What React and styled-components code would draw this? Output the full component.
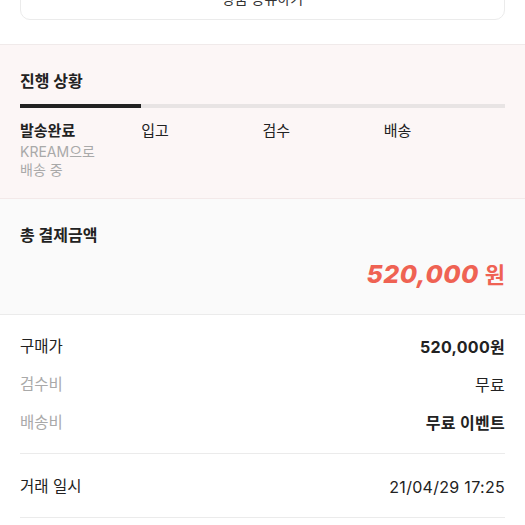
import styled, { createGlobalStyle } from 'styled-components';

const Global = createGlobalStyle`
  body {
    margin: 0;
    background: #fff;
    font-family: Inter, "Noto Sans CJK KR", "Noto Sans", sans-serif;
    color: #222;
    overflow: hidden;
  }
`

const Page = styled.div`
  width: 525px;
`

const ShareWrap = styled.div`
  padding: 0 20px 24px;
`

const ShareButton = styled.div`
  height: 42px;
  margin-top: -24px;
  border: 1px solid #ebebeb;
  border-radius: 10px;
  display: flex;
  align-items: center;
  justify-content: center;
  font-size: 14px;
  color: #333;
`

const Section = styled.section`
  border-top: 1px solid ${p => p.$line || '#efeaea'};
  background: ${p => p.$bg || '#fff'};
  padding: ${p => p.$pad || '25px 20px 19px'};
`

const Title = styled.h3`
  margin: 0;
  font-size: 16px;
  line-height: 22px;
  font-weight: 700;
  color: #222;
`

const Bar = styled.div`
  margin-top: 12px;
  height: 4px;
  background: #e8e4e4;
  display: flex;
`

const BarFill = styled.div`
  height: 100%;
  background: #222;
`

const Steps = styled.div`
  margin-top: 13px;
  display: grid;
  grid-template-columns: repeat(4, 1fr);
`

const StepName = styled.div`
  font-size: 15px;
  line-height: 20px;
  font-weight: ${p => (p.$active ? 700 : 400)};
  color: #222;
`

const StepDesc = styled.div`
  margin-top: 2px;
  font-size: 14px;
  line-height: 18px;
  color: #a9a9a9;
`

const Amount = styled.div`
  margin-top: 11px;
  display: flex;
  justify-content: flex-end;
  align-items: baseline;
  gap: 6px;
  color: #ef6253;
  line-height: 32px;
`

const AmountNum = styled.span`
  font-size: 25px;
  font-weight: 800;
  font-style: italic;
  letter-spacing: 0.5px;
`

const AmountUnit = styled.span`
  font-family: "Noto Sans CJK KR", sans-serif;
  font-size: 22px;
  font-weight: 700;
`

const Rows = styled.div`
  padding: ${p => p.$pad || '21px 0 19px'};
  display: flex;
  flex-direction: column;
  gap: 16px;
`

const Row = styled.div`
  display: flex;
  justify-content: space-between;
  align-items: center;
  font-size: 15px;
  line-height: 22px;
`

const Label = styled.span`
  font-size: 15.5px;
  color: ${p => (p.$muted ? '#a9a9a9' : '#222')};
`

const Value = styled.span`
  font-size: 16px;
  letter-spacing: 0.3px;
  font-weight: ${p => (p.$bold ? 700 : 400)};
  color: #222;
`

const Divider = styled.hr`
  margin: 0;
  border: none;
  border-top: 1px solid #ebebeb;
`

const Details = styled.div`
  border-top: 1px solid #ebebeb;
  padding: 0 20px;
`

const steps = [
  { name: '발송완료', active: true, desc: ['KREAM으로', '배송 중'] },
  { name: '입고' },
  { name: '검수' },
  { name: '배송' },
]

const App = () => {
  return (
    <Page>
      <Global />
      <ShareWrap>
        <ShareButton>상품 공유하기</ShareButton>
      </ShareWrap>

      <Section $bg="#fcf6f6" $line="#f0eaea">
        <Title>진행 상황</Title>
        <Bar>
          <BarFill style={{ width: '25%' }} />
        </Bar>
        <Steps>
          {steps.map(s => (
            <div key={s.name}>
              <StepName $active={s.active}>{s.name}</StepName>
              {s.desc && (
                <StepDesc>
                  {s.desc[0]}
                  <br />
                  {s.desc[1]}
                </StepDesc>
              )}
            </div>
          ))}
        </Steps>
      </Section>

      <Section $bg="#fafafa" $line="#f3e9e9" $pad="25px 20px 24px">
        <Title>총 결제금액</Title>
        <Amount>
          <AmountNum>520,000</AmountNum>
          <AmountUnit>원</AmountUnit>
        </Amount>
      </Section>

      <Details>
        <Rows>
          <Row><Label>구매가</Label><Value $bold>520,000원</Value></Row>
          <Row><Label $muted>검수비</Label><Value>무료</Value></Row>
          <Row><Label $muted>배송비</Label><Value $bold>무료 이벤트</Value></Row>
        </Rows>
        <Divider />
        <Rows $pad="22px 0 19px">
          <Row><Label>거래 일시</Label><Value>21/04/29 17:25</Value></Row>
        </Rows>
        <Divider />
      </Details>
    </Page>
  )
}

export default App
